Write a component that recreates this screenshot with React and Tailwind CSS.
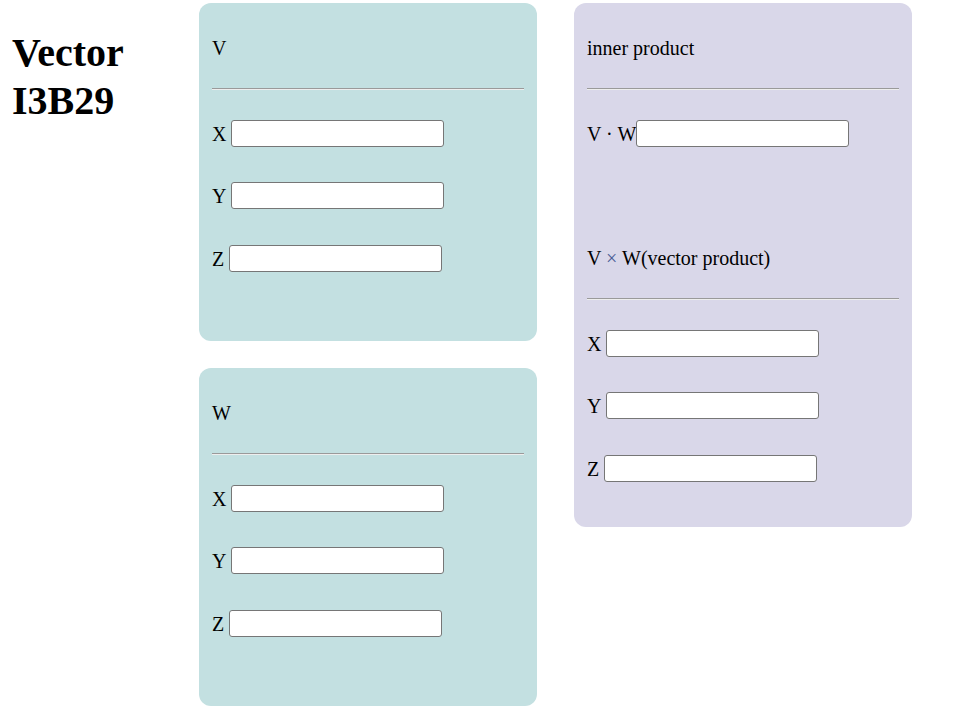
import React from 'react';

const Field = ({ label, className = '' }) => {
  return (
    <div className={`flex items-center h-[27px] ${className}`}>
      <span className="mr-[5px]">{label}</span>
      <input type="text" className="w-[213px] h-[27px] bg-white border border-[#767676] rounded-[3px] px-[2px] text-[16px] outline-none" />
    </div>
  );
};

const Rule = ({ className = '' }) => (
  <div className={`border-t border-t-[#9a9a9a] border-b border-b-[#eeeeee] ${className}`}></div>
);

const VectorCard = ({ name }) => {
  return (
    <div className="w-[338px] h-[338px] bg-[#c3e0e1] rounded-[12px] px-[13px] pt-[34px]">
      <div className="leading-[23px]">{name}</div>
      <Rule className="mt-[28px]" />
      <Field label="X" className="mt-[30px]" />
      <Field label="Y" className="mt-[35px]" />
      <Field label="Z" className="mt-[36px]" />
    </div>
  );
};

const App = () => {
  return (
    <div className="min-h-screen bg-white text-black text-[20px] font-['Liberation_Serif',serif]">
      <div className="flex items-start">
        <div className="w-[199px] shrink-0">
          <h1 className="mt-[29px] pl-[12px] text-[40px] font-bold leading-[48px]">
            Vector
            <br />
            I3B29
          </h1>
        </div>

        <div className="flex flex-col gap-[27px] pt-[3px] shrink-0">
          <VectorCard name="V" />
          <VectorCard name="W" />
        </div>

        <div className="ml-[37px] mt-[3px] w-[338px] h-[524px] bg-[#d9d7e9] rounded-[12px] px-[13px] pt-[34px] shrink-0">
          <div className="leading-[23px]">inner product</div>
          <Rule className="mt-[28px]" />
          <div className="flex items-center h-[27px] mt-[30px]">
            <span>V · W</span>
            <input type="text" className="w-[213px] h-[27px] bg-white border border-[#767676] rounded-[3px] px-[2px] text-[16px] outline-none" />
          </div>

          <div className="leading-[23px] mt-[100px]">
            V <span className="text-[#4a5e96]">×</span> W(vector product)
          </div>
          <Rule className="mt-[28px]" />
          <Field label="X" className="mt-[30px]" />
          <Field label="Y" className="mt-[35px]" />
          <Field label="Z" className="mt-[36px]" />
        </div>
      </div>
    </div>
  );
};

export default App;
